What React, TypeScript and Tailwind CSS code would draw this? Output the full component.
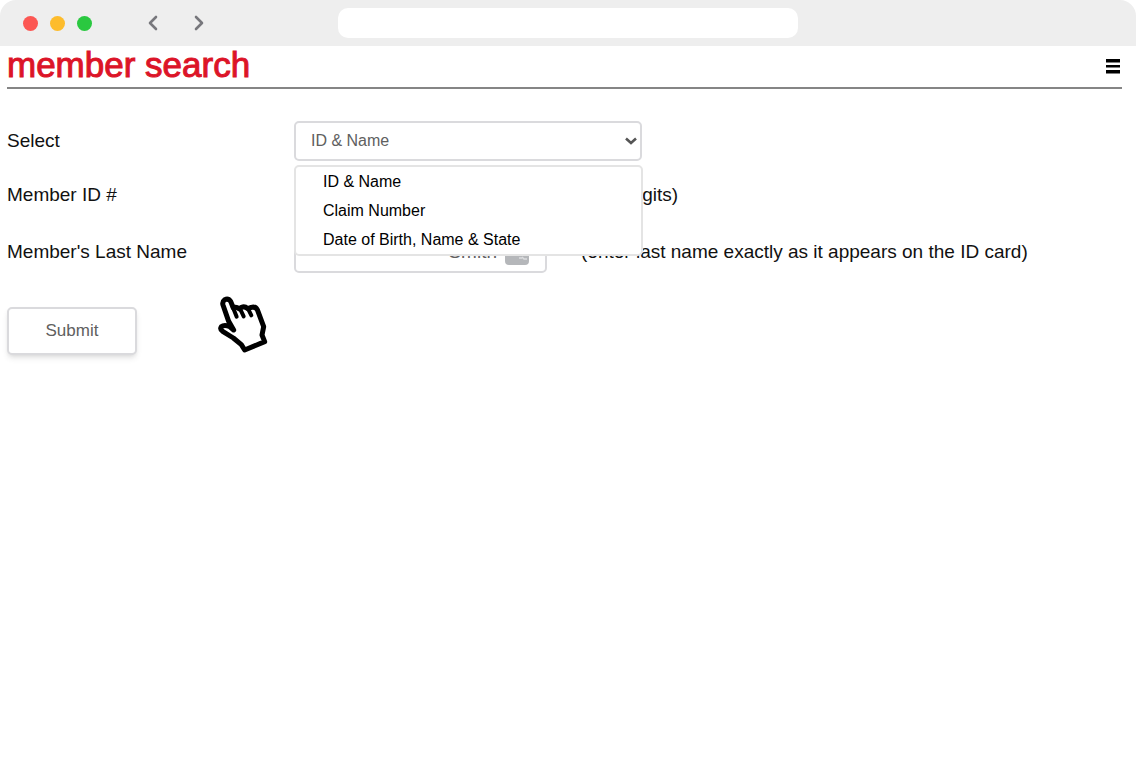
import { useState } from 'react'
import { ChevronLeft, ChevronRight } from 'lucide-react'

const searchTypes = ['ID & Name', 'Claim Number', 'Date of Birth, Name & State']

function BrowserBar() {
  return (
    <header className="flex h-[46px] items-center rounded-t-2xl bg-[#eeeeee] pl-[23px]">
      <div className="flex gap-3">
        <span className="h-[15px] w-[15px] rounded-full bg-[#fc5753]" />
        <span className="h-[15px] w-[15px] rounded-full bg-[#fdbc2c]" />
        <span className="h-[15px] w-[15px] rounded-full bg-[#2ac840]" />
      </div>
      <nav className="ml-[49px] flex gap-[22px]">
        <button type="button" aria-label="Back" className="text-[#77777c]">
          <ChevronLeft size={24} strokeWidth={2.6} />
        </button>
        <button type="button" aria-label="Forward" className="text-[#77777c]">
          <ChevronRight size={24} strokeWidth={2.6} />
        </button>
      </nav>
      <input
        type="text"
        aria-label="Address"
        className="ml-[127px] h-[30px] w-full max-w-[460px] rounded-[10px] bg-white px-4 text-sm outline-none"
      />
    </header>
  )
}

function HandCursor() {
  return (
    <svg
      viewBox="0 0 174 192"
      className="pointer-events-none absolute top-[292px] left-[214px] h-16 w-[58px]"
      fill="white"
      stroke="black"
      strokeWidth="15"
      strokeLinejoin="round"
      strokeLinecap="round"
    >
      <path d="M59 114 L46 103 Q30 97 22 104 Q17 111 26 118 L58 138 L82 158 L92 174 L152 149 L144 129 L149 104 L130 53 Q124 43 112 46 L101 50 Q92 42 83 46 L75 50 Q66 43 58 48 L50 28 Q43 18 32 23 Q24 29 27 39 L44 88 Z" />
      <path d="M56 44 L68 74 M78 50 L89 73 M102 50 L112 70" fill="none" strokeWidth="12" />
    </svg>
  )
}

function SearchTypeSelect() {
  const [value, setValue] = useState(searchTypes[0])

  return (
    <div className="relative w-[348px]">
      <select
        id="search-type"
        value={value}
        onChange={(e) => setValue(e.target.value)}
        className="block h-10 w-full appearance-none rounded-[5px] border-2 border-[#dadadd] bg-white pl-[15px] text-base text-[#606060] outline-none"
      >
        {searchTypes.map((type) => (
          <option key={type}>{type}</option>
        ))}
      </select>
      <svg
        viewBox="0 0 12 8"
        className="pointer-events-none absolute top-4 right-[5px] h-2 w-3"
        fill="none"
        stroke="#555"
        strokeWidth="2.6"
      >
        <path d="M1 1.5 L6 6 L11 1.5" />
      </svg>
      <ul
        role="listbox"
        aria-label="Search type"
        className="absolute top-11 left-0 z-10 w-[349px] rounded-[5px] border-2 border-[#e4e4e4] bg-white"
      >
        {searchTypes.map((type) => (
          <li key={type} role="option" aria-selected={type === value}>
            <button
              type="button"
              onClick={() => setValue(type)}
              className="block h-[29px] w-full pl-[27px] text-left text-base text-black"
            >
              {type}
            </button>
          </li>
        ))}
      </ul>
    </div>
  )
}

export default function App() {
  return (
    <div className="relative min-h-screen bg-white font-['Liberation_Sans',Arial,sans-serif] text-[19px] text-[#111]">
      <BrowserBar />
      <main className="pr-[14px] pl-[7px]">
        <div className="flex h-[43px] items-center justify-between border-b-2 border-[#858585]">
          <h1 className="pb-1 text-[35px] leading-9 text-[#dc1428] [-webkit-text-stroke:1px_#dc1428]">
            member search
          </h1>
          <button type="button" aria-label="Menu" className="mr-0.5">
            <svg viewBox="0 0 14 15" className="h-[15px] w-[14px]" fill="black">
              <path d="M0 0h14v3.6H0zM0 6h14v2.6H0zM0 11h14v3.6H0z" />
            </svg>
          </button>
        </div>

        <form className="pt-8" onSubmit={(e) => e.preventDefault()}>
          <div className="flex items-center">
            <label htmlFor="search-type" className="w-[287px]">
              Select
            </label>
            <SearchTypeSelect />
          </div>

          <div className="mt-[14px] flex items-center">
            <label htmlFor="member-id" className="w-[287px]">
              Member ID #
            </label>
            <input
              id="member-id"
              type="text"
              className="h-10 w-[253px] rounded-[5px] border-2 border-[#dadadd] px-4 text-base"
            />
            <span className="ml-[34px]">(all 9 digits)</span>
          </div>

          <div className="mt-[17px] flex items-center">
            <label htmlFor="last-name" className="w-[287px]">
              Member&apos;s Last Name
            </label>
            <div className="flex h-[41px] w-[253px] items-center rounded-[5px] border-2 border-[#dadadd] pr-4">
              <input
                id="last-name"
                type="text"
                defaultValue="Smith"
                className="w-full min-w-0 text-right text-[19px] text-[#606060] outline-none"
              />
              <button type="button" aria-label="Fill in saved name" className="ml-2">
                <svg viewBox="0 0 24 24" className="h-6 w-6">
                  <rect width="24" height="24" rx="4" fill="#b5b7ba" />
                  <path d="M14 17h3M17 16l2 2h3" stroke="#dcdddf" strokeWidth="1.5" fill="none" />
                </svg>
              </button>
            </div>
            <span className="ml-[34px]">(enter last name exactly as it appears on the ID card)</span>
          </div>

          <button
            type="submit"
            className="mt-[34px] h-12 w-[130px] rounded-[5px] border-2 border-[#dadadd] bg-white text-[17px] text-[#606060] shadow-md"
          >
            Submit
          </button>
        </form>
      </main>
      <HandCursor />
    </div>
  )
}
